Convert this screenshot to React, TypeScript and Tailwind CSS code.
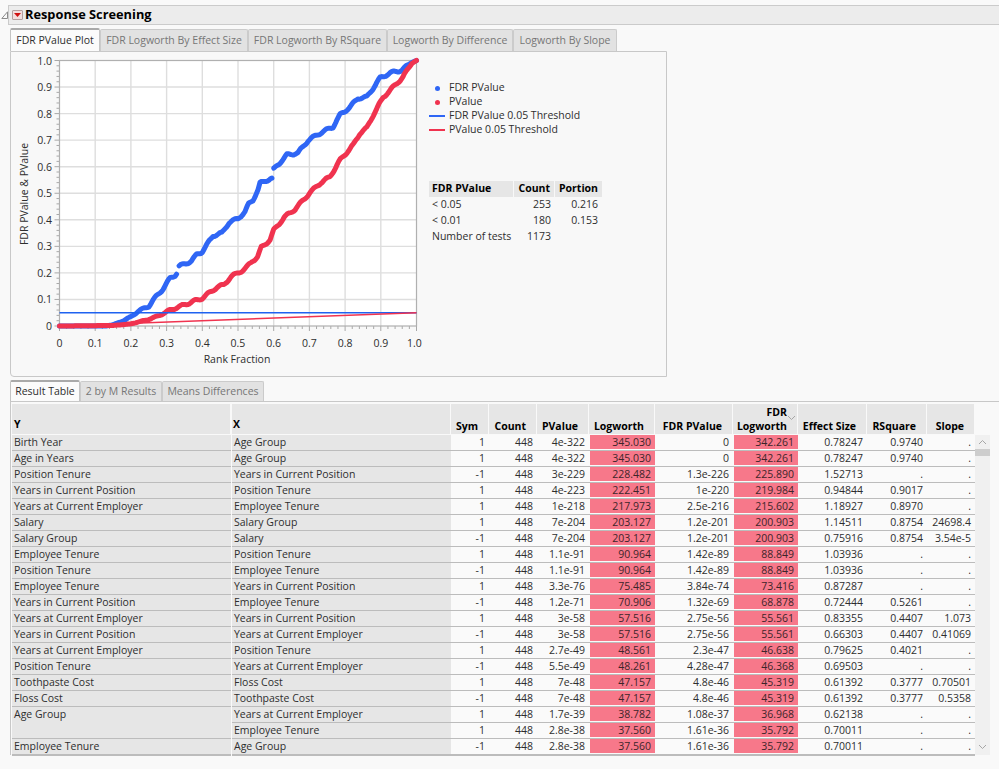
import React from "react";

type Row = [string, string, string, string, string, string, string, string, string, string, string];

const rows: Row[] = [
  ["Birth Year", "Age Group", "1", "448", "4e-322", "345.030", "0", "342.261", "0.78247", "0.9740", "."],
  ["Age in Years", "Age Group", "1", "448", "4e-322", "345.030", "0", "342.261", "0.78247", "0.9740", "."],
  ["Position Tenure", "Years in Current Position", "-1", "448", "3e-229", "228.482", "1.3e-226", "225.890", "1.52713", ".", "."],
  ["Years in Current Position", "Position Tenure", "1", "448", "4e-223", "222.451", "1e-220", "219.984", "0.94844", "0.9017", "."],
  ["Years at Current Employer", "Employee Tenure", "1", "448", "1e-218", "217.973", "2.5e-216", "215.602", "1.18927", "0.8970", "."],
  ["Salary", "Salary Group", "1", "448", "7e-204", "203.127", "1.2e-201", "200.903", "1.14511", "0.8754", "24698.4"],
  ["Salary Group", "Salary", "-1", "448", "7e-204", "203.127", "1.2e-201", "200.903", "0.75916", "0.8754", "3.54e-5"],
  ["Employee Tenure", "Position Tenure", "1", "448", "1.1e-91", "90.964", "1.42e-89", "88.849", "1.03936", ".", "."],
  ["Position Tenure", "Employee Tenure", "-1", "448", "1.1e-91", "90.964", "1.42e-89", "88.849", "1.03936", ".", "."],
  ["Employee Tenure", "Years in Current Position", "1", "448", "3.3e-76", "75.485", "3.84e-74", "73.416", "0.87287", ".", "."],
  ["Years in Current Position", "Employee Tenure", "-1", "448", "1.2e-71", "70.906", "1.32e-69", "68.878", "0.72444", "0.5261", "."],
  ["Years at Current Employer", "Years in Current Position", "1", "448", "3e-58", "57.516", "2.75e-56", "55.561", "0.83355", "0.4407", "1.073"],
  ["Years in Current Position", "Years at Current Employer", "-1", "448", "3e-58", "57.516", "2.75e-56", "55.561", "0.66303", "0.4407", "0.41069"],
  ["Years at Current Employer", "Position Tenure", "1", "448", "2.7e-49", "48.561", "2.3e-47", "46.638", "0.79625", "0.4021", "."],
  ["Position Tenure", "Years at Current Employer", "-1", "448", "5.5e-49", "48.261", "4.28e-47", "46.368", "0.69503", ".", "."],
  ["Toothpaste Cost", "Floss Cost", "1", "448", "7e-48", "47.157", "4.8e-46", "45.319", "0.61392", "0.3777", "0.70501"],
  ["Floss Cost", "Toothpaste Cost", "-1", "448", "7e-48", "47.157", "4.8e-46", "45.319", "0.61392", "0.3777", "0.5358"],
  ["Age Group", "Years at Current Employer", "1", "448", "1.7e-39", "38.782", "1.08e-37", "36.968", "0.62138", ".", "."],
  ["", "Employee Tenure", "1", "448", "2.8e-38", "37.560", "1.61e-36", "35.792", "0.70011", ".", "."],
  ["Employee Tenure", "Age Group", "-1", "448", "2.8e-38", "37.560", "1.61e-36", "35.792", "0.70011", ".", "."],
];

const cols = "grid grid-cols-[220px_219px_38px_48px_52px_66px_78px_65px_69px_60px_48px]";

const blueA = [[0, 0], [0.13, 0], [0.15, 0.005], [0.18, 0.02], [0.2, 0.035], [0.22, 0.055], [0.25, 0.075], [0.27, 0.11], [0.29, 0.14], [0.31, 0.18], [0.328, 0.195]];
const blueB = [[0.335, 0.225], [0.37, 0.245], [0.385, 0.27], [0.4, 0.28], [0.42, 0.32], [0.43, 0.34], [0.455, 0.35], [0.475, 0.39], [0.5, 0.405], [0.52, 0.43], [0.53, 0.46], [0.542, 0.475], [0.556, 0.512], [0.562, 0.538], [0.595, 0.557]];
const blueC = [[0.6, 0.59], [0.637, 0.644], [0.668, 0.652], [0.697, 0.7], [0.735, 0.73], [0.766, 0.75], [0.786, 0.795], [0.814, 0.825], [0.836, 0.858], [0.861, 0.862], [0.884, 0.907], [0.898, 0.934], [0.926, 0.953], [0.959, 0.964], [0.987, 0.994], [1, 1]];
const red = [[0, 0], [0.15, 0.002], [0.2, 0.008], [0.25, 0.025], [0.28, 0.04], [0.31, 0.06], [0.33, 0.07], [0.36, 0.085], [0.4, 0.105], [0.44, 0.145], [0.46, 0.155], [0.48, 0.185], [0.5, 0.2], [0.52, 0.215], [0.54, 0.245], [0.555, 0.26], [0.565, 0.295], [0.59, 0.325], [0.6, 0.36], [0.63, 0.41], [0.64, 0.42], [0.66, 0.44], [0.68, 0.47], [0.7, 0.5], [0.73, 0.538], [0.757, 0.561], [0.786, 0.625], [0.823, 0.682], [0.842, 0.727], [0.861, 0.746], [0.879, 0.795], [0.907, 0.862], [0.94, 0.907], [0.962, 0.938], [0.987, 0.99], [1, 1]];

const px = (v: number) => 59.5 + v * 357;
const py = (v: number) => 326 - v * 265.5;

// the real series is a run of dots, so add a small wobble between the read-off points
const toPts = (list: number[][]) => {
  const out: string[] = [];
  for (let i = 0; i < list.length - 1; i++) {
    const [x0, y0] = list[i];
    const [x1, y1] = list[i + 1];
    const n = Math.max(1, Math.round((x1 - x0) / 0.004));
    for (let k = 0; k < n; k++) {
      const x = x0 + ((x1 - x0) * k) / n;
      const y = y0 + ((y1 - y0) * k) / n;
      const amp = Math.min(1, y * 12) * Math.min(1, (1 - x) * 30) * 0.0045;
      out.push(`${px(x).toFixed(1)},${py(y + amp * Math.sin(x * 170)).toFixed(1)}`);
    }
  }
  const [lx, ly] = list[list.length - 1];
  out.push(`${px(lx)},${py(ly)}`);
  return out.join(" ");
};

const steps = Array.from({ length: 51 }, (_, i) => i / 50);
const tenths = Array.from({ length: 11 }, (_, i) => i / 10);
const label = (v: number) => (v === 0 ? "0" : v.toFixed(1));

function Plot() {
  return (
    <svg viewBox="11 52 418 324" className="w-[418px] h-[324px] shrink-0 text-[10.5px]">
      <rect x="59.5" y="60.5" width="357" height="265.5" fill="#ffffff" />
      {tenths.slice(1, 10).map((v) => (
        <g key={v} stroke="#dedede" strokeWidth="1.4">
          <line x1={px(v)} x2={px(v)} y1="60.5" y2="326" />
          <line x1="59.5" x2="416.5" y1={py(v)} y2={py(v)} />
        </g>
      ))}
      {steps.map((v, i) => (
        <g key={i} stroke="#a8a8a8" strokeWidth="1">
          <line x1={px(v)} x2={px(v)} y1="326" y2={i % 5 === 0 ? 331 : 329} />
          <line x1={59.5 - (i % 5 === 0 ? 5 : 3)} x2="59.5" y1={py(v)} y2={py(v)} />
        </g>
      ))}
      <rect x="59.5" y="60.5" width="357" height="265.5" fill="none" stroke="#b0b0b0" strokeWidth="1.2" />
      <g fill="none" stroke="#2f66f5" strokeWidth="5" strokeLinecap="round" strokeLinejoin="round">
        <polyline points={toPts(blueA)} />
        <polyline points={toPts(blueB)} />
        <polyline points={toPts(blueC)} />
      </g>
      <polyline points={toPts(red)} fill="none" stroke="#f0334f" strokeWidth="5" strokeLinecap="round" strokeLinejoin="round" />
      <line x1="59.5" x2="416.5" y1={py(0.05)} y2={py(0.05)} stroke="#1f62f0" strokeWidth="1.6" />
      <line x1="59.5" x2="416.5" y1={py(0)} y2={py(0.05)} stroke="#f0334f" strokeWidth="1.6" />
      {tenths.map((v) => (
        <text key={v} x="52" y={py(v) + 4} textAnchor="end" fill="#2e2e2e">
          {label(v)}
        </text>
      ))}
      {tenths.map((v) => (
        <text key={v} x={v === 1 ? px(v) - 2 : px(v)} y="347" textAnchor="middle" fill="#2e2e2e">
          {label(v)}
        </text>
      ))}
      <text x="237" y="363" textAnchor="middle" fill="#2e2e2e">
        Rank Fraction
      </text>
      <text x="28" y="194" textAnchor="middle" fill="#2e2e2e" transform="rotate(-90 28 194)">
        FDR PValue &amp; PValue
      </text>
    </svg>
  );
}

function LegendItem({ kind, color, text }: { kind: "dot" | "line"; color: string; text: string }) {
  return (
    <div className="flex items-center h-[14px]">
      <span className="w-[20px] flex justify-center pr-[4px]">
        {kind === "dot" ? (
          <span className={`w-[5px] h-[5px] rounded-full ${color}`} />
        ) : (
          <span className={`w-[16px] h-[2px] ${color}`} />
        )}
      </span>
      <span>{text}</span>
    </div>
  );
}

function Tabs({ items, widths, tall, short }: { items: string[]; widths: string[]; tall: string; short: string }) {
  return (
    <div className="flex items-end">
      {items.map((t, i) => (
        <div
          key={t}
          className={`${widths[i]} flex items-center justify-center rounded-t-[2px] border-x border-t ${
            i === 0
              ? `${tall} bg-[#fbfbfb] border-[#c4c4c4] border-t-[#a9a9a9] border-t-2 text-[#2e2e2e]`
              : `${short} bg-[#e2e2e2] border-[#cbcbcb] text-[#767676]`
          }`}
        >
          {t}
        </div>
      ))}
    </div>
  );
}

function Chevron({ up }: { up?: boolean }) {
  return (
    <svg width="9" height="6" viewBox="0 0 9 6" fill="none" stroke="#a6a6a6" strokeWidth="1">
      <path d={up ? "M1 5 L4.5 1.5 L8 5" : "M1 1 L4.5 4.5 L8 1"} />
    </svg>
  );
}

function HeadCell({ children, caret }: { children: React.ReactNode; caret?: boolean }) {
  return (
    <div className="relative mr-px flex items-end justify-end pr-[10px] text-right font-bold leading-[14px] text-black bg-[#e6e6e6]">
      <span className="pb-px">{children}</span>
      {caret && (
        <span className="absolute right-[1px] top-[11px]">
          <Chevron />
        </span>
      )}
    </div>
  );
}

export default function App() {
  return (
    <div className="h-[769px] w-full overflow-hidden bg-[#f9f9f9] pt-[5px] text-[10.5px] text-[#2e2e2e] [font-family:'Open_Sans',sans-serif]">
      <div className="flex h-[20px]">
        <div className="flex w-[8px] items-center pl-[1px]">
          <svg width="7" height="8" viewBox="0 0 7 8" fill="none" stroke="#8c8c8c" strokeWidth="1">
            <path d="M6.5 0.8 L6.5 7.5 L0.8 7.5 Z" />
          </svg>
        </div>
        <div className="flex flex-1 items-center border-y border-l border-[#cbcbcb] bg-[#ececec] pl-[3px]">
          <span className="flex h-[10px] w-[11px] items-center justify-center rounded-[1px] border border-[#b5a0a0] bg-[#f3dede]">
            <svg width="7" height="4" viewBox="0 0 7 4" fill="#d01010">
              <path d="M0 0 H7 L3.5 4 Z" />
            </svg>
          </span>
          <span className="ml-[2px] text-[12.8px] font-bold text-black">Response Screening</span>
        </div>
      </div>

      <div className="ml-[10px] mt-[3px]">
        <Tabs
          items={["FDR PValue Plot", "FDR Logworth By Effect Size", "FDR Logworth By RSquare", "Logworth By Difference", "Logworth By Slope"]}
          widths={["w-[90px]", "w-[148px]", "w-[139px]", "w-[126px]", "w-[104px]"]}
          tall="h-[23px]"
          short="h-[22px]"
        />
        <div className="flex h-[326px] w-[657px] rounded-bl-[4px] border border-[#c8c8c8] bg-[#f8f8f8]">
          <Plot />
          <div className="flex flex-col">
            <div className="mt-[29px]">
              <LegendItem kind="dot" color="bg-[#2f66f5]" text="FDR PValue" />
              <LegendItem kind="dot" color="bg-[#f0334f]" text="PValue" />
              <LegendItem kind="line" color="bg-[#2f66f5]" text="FDR PValue 0.05 Threshold" />
              <LegendItem kind="line" color="bg-[#f0334f]" text="PValue 0.05 Threshold" />
            </div>
            <div className="mt-[44px] w-[173px]">
              <div className="grid h-[15px] grid-cols-[85px_41px_47px] items-center font-bold text-black">
                <span className="flex h-full items-center bg-[#e6e6e6] pl-[3px] mr-px">FDR PValue</span>
                <span className="flex h-full items-center justify-end bg-[#e6e6e6] pr-[4px] mr-px">Count</span>
                <span className="flex h-full items-center justify-end bg-[#e6e6e6] pr-[4px]">Portion</span>
              </div>
              <div className="mt-[1px]">
                {[
                  ["< 0.05", "253", "0.216"],
                  ["< 0.01", "180", "0.153"],
                  ["Number of tests", "1173", ""],
                ].map((r) => (
                  <div key={r[0]} className="grid h-[16px] grid-cols-[85px_41px_47px] items-center">
                    <span className="pl-[3px]">{r[0]}</span>
                    <span className="pr-[4px] text-right">{r[1]}</span>
                    <span className="pr-[4px] text-right">{r[2]}</span>
                  </div>
                ))}
              </div>
            </div>
          </div>
        </div>

        <div className="mt-[3px]">
          <Tabs
            items={["Result Table", "2 by M Results", "Means Differences"]}
            widths={["w-[70px]", "w-[82px]", "w-[102px]"]}
            tall="h-[21px]"
            short="h-[20px]"
          />
        </div>

        <div className="border-l border-t border-[#c8c8c8] pl-px pt-[2px]">
          <div className={`${cols} h-[30px]`}>
            <div className="mr-[2px] flex items-end bg-[#e6e6e6] pb-px pl-[2px] font-bold text-black">Y</div>
            <div className="mr-px flex items-end bg-[#e6e6e6] pb-px pl-[1px] font-bold text-black">X</div>
            <HeadCell>Sym</HeadCell>
            <HeadCell>Count</HeadCell>
            <HeadCell>PValue</HeadCell>
            <HeadCell>Logworth</HeadCell>
            <HeadCell>FDR PValue</HeadCell>
            <HeadCell caret>
              FDR
              <br />
              Logworth
            </HeadCell>
            <HeadCell>Effect Size</HeadCell>
            <HeadCell>RSquare</HeadCell>
            <HeadCell>Slope</HeadCell>
          </div>
          <div className="flex pt-px">
            <div className="w-[963px]">
              {rows.map((r, i) => (
                <div key={i} className={`${cols} h-[16px] leading-[15px]`}>
                  <div className={`mr-[1px] bg-[#e6e6e6] pl-[2px] ${i === 17 ? "" : "border-b-2 border-[#bcbcbc]"}`}>{r[0]}</div>
                  <div className="bg-[#e6e6e6] pl-[2px] border-b-2 border-[#bcbcbc]">{r[1]}</div>
                  {r.slice(2).map((c, j) => {
                    const pink = j === 3 || j === 5;
                    return (
                      <div key={j} className="border-b-2 border-[#bcbcbc] bg-[#fafafa] text-right">
                        <div className={`h-[14px] overflow-visible pr-[4px] ${pink ? "ml-[1px] bg-[#f7788a] text-[#3d2529]" : ""}`}>{c}</div>
                      </div>
                    );
                  })}
                </div>
              ))}
            </div>
            <div className="relative flex h-[320px] w-[15px] flex-col items-center justify-between bg-[#f0f0f0] pt-[4px] pb-[5px]">
              <Chevron up />
              <div className="absolute left-0 top-[14px] h-[7px] w-[15px] bg-[#cdcdcd]" />
              <Chevron />
            </div>
          </div>
        </div>
      </div>
    </div>
  );
}
